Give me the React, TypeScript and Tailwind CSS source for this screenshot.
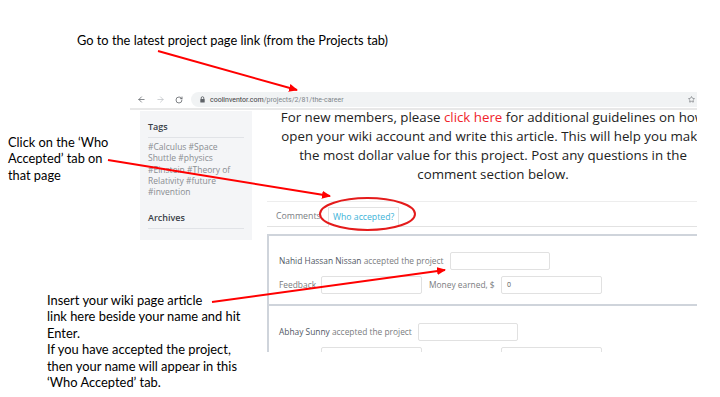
import React from 'react'
import {ArrowLeft, ArrowRight, RotateCw, Star} from 'lucide-react'

function BrowserBar() {
    return (
        <div className="flex h-[19px] items-center border-b-2 border-[#e8e8e8] pl-[7px]">
            <ArrowLeft size={9} strokeWidth={2} className="text-[#5f6368]" />
            <ArrowRight size={9} strokeWidth={2} className="ml-[10px] text-[#bdc1c6]" />
            <RotateCw size={8} strokeWidth={2.4} className="ml-[10px] text-[#5f6368]" />
            <div className="ml-[8px] flex h-[15px] flex-1 items-center rounded-l-full bg-[#f1f3f4] pl-[9px] pr-[2px]">
                <svg width="5" height="7" viewBox="0 0 5 7" className="shrink-0">
                    <path d="M1.2 3V2a1.3 1.3 0 0 1 2.6 0v1" fill="none" stroke="#5f6368" strokeWidth="0.9" />
                    <rect x="0.3" y="3" width="4.4" height="3.6" rx="0.5" fill="#5f6368" />
                </svg>
                <span className="ml-[5px] whitespace-nowrap text-[7px] leading-[10px] font-['Roboto',sans-serif]">
                    <span className="text-[#3c4043]">coolinventor.com</span>
                    <span className="text-[#80868b]">/projects/2/81/the-career</span>
                </span>
                <div className="flex-1" />
                <Star size={7} strokeWidth={2} className="text-[#5f6368]" />
            </div>
        </div>
    )
}

function Sidebar() {
    return (
        <div className="ml-[10px] mt-[1px] h-[129px] w-[112px] shrink-0 bg-[#f4f5f7] px-[8px]">
            <div className="border-b border-[#e1e3e7] pt-[10px] pb-[4px] text-[9px] leading-[12px] font-semibold text-[#3a3f48]">Tags</div>
            <div className="mt-[3px] text-[8.5px] leading-[11.3px] text-[#8a8d92]">
                <div className="whitespace-nowrap">#Calculus #Space</div>
                <div className="whitespace-nowrap">Shuttle #physics</div>
                <div className="whitespace-nowrap">#Einstein #Theory of</div>
                <div className="whitespace-nowrap">Relativity #future</div>
                <div className="whitespace-nowrap">#invention</div>
            </div>
            <div className="mt-[15px] border-b border-[#e1e3e7] pb-[4px] text-[9px] leading-[12px] font-semibold text-[#3a3f48]">Archives</div>
        </div>
    )
}

function Field({w, value}: {w: string, value?: string}) {
    return (
        <div className={`flex h-[18px] shrink-0 items-center rounded-[2px] border border-[#e1e1e1] bg-white pl-[5px] text-[7px] text-[#555] ${w}`}>
            {value}
        </div>
    )
}

function Entry({name, first}: {name: string, first?: boolean}) {
    return (
        <div className={first ? 'border-b-2 border-[#cfd4db] px-[10px] pt-[16px] pb-[10px]' : 'px-[10px] pt-[17px] pb-[10px]'}>
            <div className="flex h-[18px] items-center gap-[6px] text-[8.4px] whitespace-nowrap">
                <span>
                    <span className="text-[#505764]">{name}</span>
                    <span className="text-[#7a7c80]"> accepted the project</span>
                </span>
                <Field w="w-[100px]" />
            </div>
            <div className="mt-[6px] flex h-[18px] items-center text-[8.4px] whitespace-nowrap text-[#7a7c80]">
                <span className="w-[42px] shrink-0">Feedback</span>
                <Field w="w-[101px]" />
                <span className="ml-[7px] w-[72px] shrink-0">Money earned, $</span>
                <Field w="w-[101px]" value="0" />
            </div>
        </div>
    )
}

function Screenshot() {
    return (
        <div className="absolute left-[130px] top-[91px] h-[261px] w-[567px] overflow-hidden bg-white font-['Open_Sans',sans-serif]">
            <BrowserBar />
            <div className="flex">
                <Sidebar />
                <div className="ml-[15px] w-[452px] shrink-0">
                    <div className="-mt-[2px] text-center text-[13.3px] leading-[19px] text-[#222]">
                        <div className="whitespace-nowrap">For new members, please <span className="text-[#f0232b]">click here</span> for additional guidelines on how</div>
                        <div className="whitespace-nowrap">open your wiki account and write this article. This will help you make</div>
                        <div className="whitespace-nowrap">the most dollar value for this project. Post any questions in the</div>
                        <div className="whitespace-nowrap">comment section below.</div>
                    </div>
                    <div className="mt-[17px] flex h-[26px] items-end border-t border-b border-t-[#ededed] border-b-[#e2e2e2]">
                        <span className="ml-[9px] w-[52px] shrink-0 whitespace-nowrap pb-[3px] text-[8.8px] leading-[14px] text-[#7b7e84]">Comments</span>
                        <span className="-mb-px flex h-[20px] items-center whitespace-nowrap border border-b-0 border-[#e2e2e2] bg-white px-[4px] text-[8.7px] text-[#3bb3d8]">Who accepted?</span>
                    </div>
                    <div className="mt-[7px] border-t-2 border-l-2 border-[#cfd4db]">
                        <Entry name="Nahid Hassan Nissan" first />
                        <Entry name="Abhay Sunny" />
                    </div>
                </div>
            </div>
        </div>
    )
}

function Overlay() {
    return (
        <svg className="pointer-events-none absolute inset-0" width="720" height="397" viewBox="0 0 720 397">
            <defs>
                <marker id="head" markerUnits="userSpaceOnUse" markerWidth="9" markerHeight="8" refX="8" refY="4" orient="auto">
                    <path d="M0 0L9 4L0 8z" fill="#f00" />
                </marker>
            </defs>
            <line x1="158" y1="51" x2="297" y2="90" stroke="#f00" strokeWidth="2" markerEnd="url(#head)" />
            <line x1="108" y1="160" x2="330" y2="196" stroke="#f00" strokeWidth="2" markerEnd="url(#head)" />
            <line x1="212" y1="302" x2="445" y2="270" stroke="#f00" strokeWidth="2" markerEnd="url(#head)" />
            <ellipse cx="367.5" cy="214" rx="47.5" ry="16" fill="none" stroke="#e41b1b" strokeWidth="2" />
        </svg>
    )
}

export default function App() {
    const note = "absolute font-['Lato','Liberation_Sans',sans-serif] leading-[16.4px] text-black whitespace-nowrap"
    return (
        <div className="relative h-[397px] w-[720px] overflow-hidden bg-white">
            <div className={`${note} left-[77px] top-[32px] text-[12.8px]`}>Go to the latest project page link (from the Projects tab)</div>
            <Screenshot />
            <div className={`${note} left-[8px] top-[134px] text-[12.8px] leading-[16.3px]`}>
                <div>Click on the ‘Who</div>
                <div>Accepted’ tab on</div>
                <div>that page</div>
            </div>
            <div className={`${note} left-[47px] top-[292px] text-[12.9px]`}>
                <div>Insert your wiki page article</div>
                <div>link here beside your name and hit</div>
                <div>Enter.</div>
                <div>If you have accepted the project,</div>
                <div>then your name will appear in this</div>
                <div>‘Who Accepted’ tab.</div>
            </div>
            <Overlay />
        </div>
    )
}
